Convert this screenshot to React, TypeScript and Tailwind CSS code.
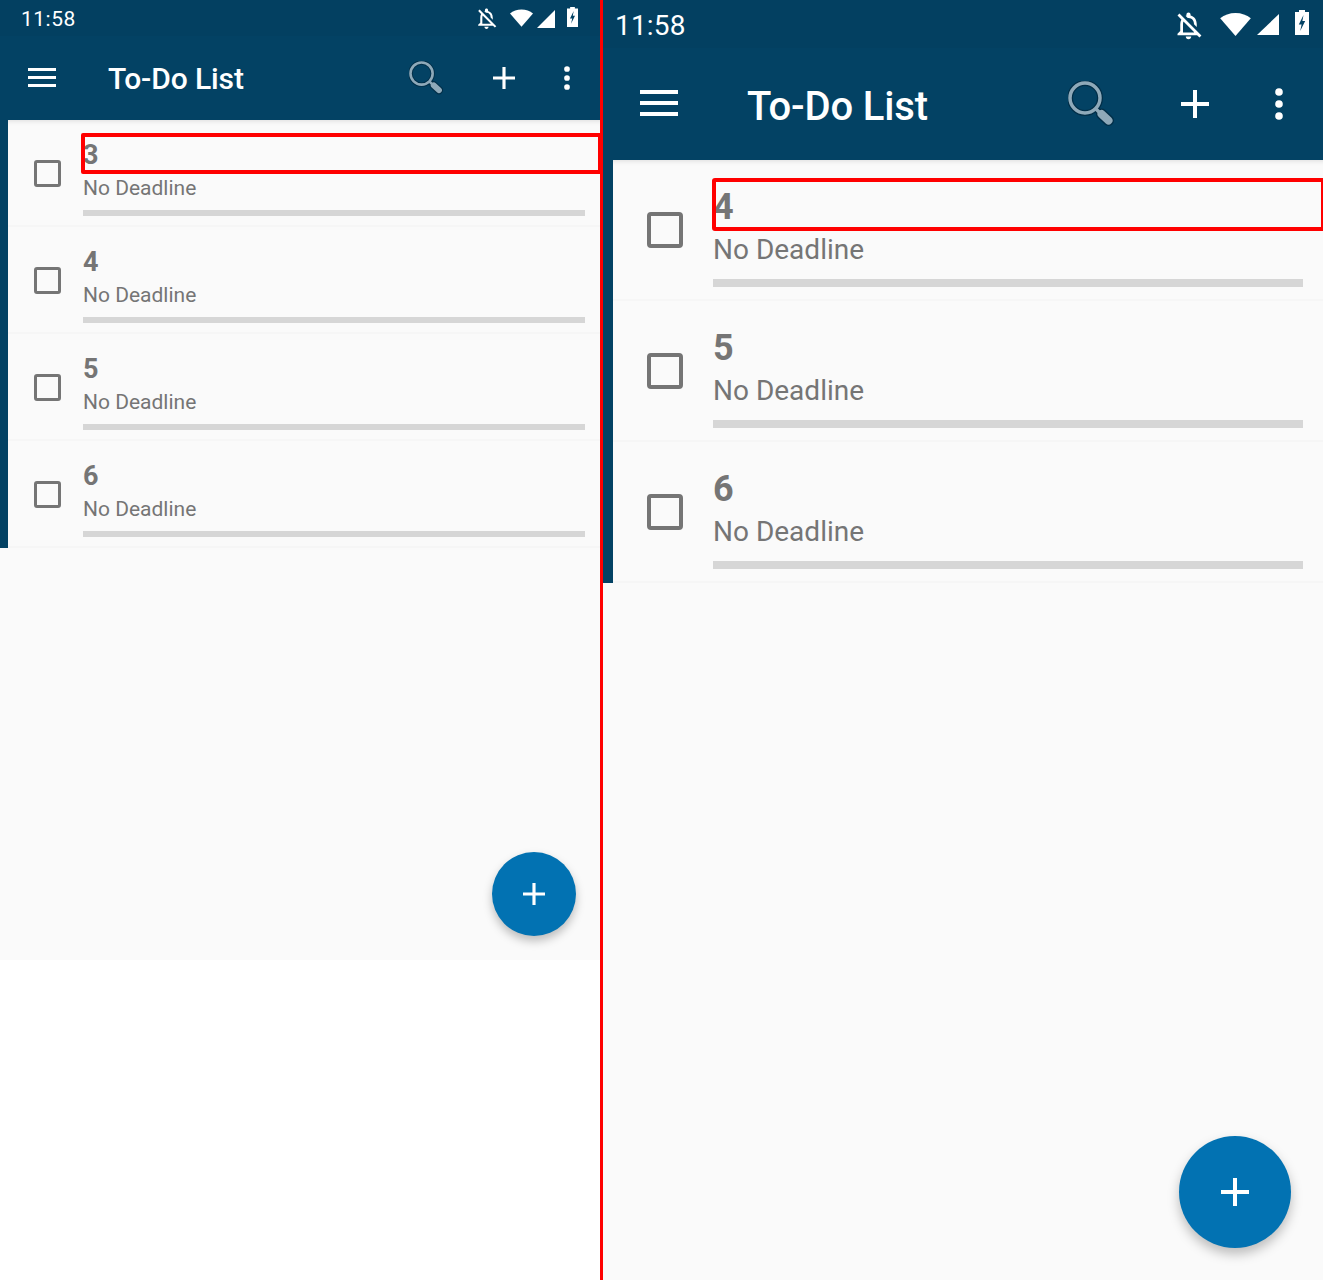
import React from 'react'

const DARK = 'bg-[#034264]'

function BellOff({ className }: { className: string }) {
  return (
    <svg viewBox="0 0 24 24" fill="#fff" className={className}>
      <path d="M12 22c1.1 0 2-.9 2-2h-4c0 1.1.9 2 2 2zm0-15.5c2.49 0 4 2.02 4 4.5v.1l2 2V11c0-3.08-1.64-5.64-4.5-6.32V4c0-.83-.67-1.5-1.5-1.5s-1.5.67-1.5 1.5v.68c-.24.06-.47.15-.69.23l1.64 1.64c.18-.02.36-.05.55-.05zM5.41 3.35L4 4.76l2.81 2.81C6.29 8.57 6 9.74 6 11v5l-2 2v1h14.24l1.74 1.74 1.41-1.41L5.41 3.35zM16 17H8v-6c0-.68.12-1.32.34-1.9L16 16.76V17z" />
    </svg>
  )
}

function Wifi({ className }: { className: string }) {
  return (
    <svg viewBox="0 0 24 18" fill="#fff" className={className}>
      <path d="M12 18 L0 4.2 C3.2 1.5 7.4 0 12 0 s8.8 1.5 12 4.2 Z" />
    </svg>
  )
}

function Signal({ className }: { className: string }) {
  return (
    <svg viewBox="0 0 18 18" preserveAspectRatio="none" fill="#fff" className={className}>
      <path d="M18 0 V18 H0 Z" />
    </svg>
  )
}

function Battery({ className }: { className: string }) {
  return (
    <svg viewBox="0 0 14 25" preserveAspectRatio="none" className={className}>
      <path fill="#fff" d="M4 0 H10 V2 H14 V25 H0 V2 H4 Z" />
      <path fill="#034264" d="M8.5 5 L3.8 14.5 H6.6 L5.2 21 L10.2 11 H7.4 Z" />
    </svg>
  )
}

function Search({ className }: { className: string }) {
  return (
    <svg viewBox="0 0 46 46" fill="none" className={className}>
      <circle cx="17" cy="17" r="15" stroke="#02283f" strokeOpacity="0.75" strokeWidth="6" />
      <path d="M28 28 L33 33" stroke="#02283f" strokeOpacity="0.75" strokeWidth="6" />
      <path d="M33.5 33 L40.5 39.5" stroke="#02283f" strokeOpacity="0.75" strokeWidth="11" strokeLinecap="round" />
      <circle cx="17" cy="17" r="15" stroke="#8ea9b9" strokeWidth="3.5" />
      <path d="M27.5 27.5 L33 33" stroke="#8ea9b9" strokeWidth="3.5" />
      <path d="M33.5 33 L40.5 39.5" stroke="#8ea9b9" strokeWidth="8" strokeLinecap="round" />
    </svg>
  )
}

function Plus({ className }: { className: string }) {
  return (
    <svg viewBox="0 0 28 28" fill="#fff" className={className}>
      <path d="M12 0 H16 V12 H28 V16 H16 V28 H12 V16 H0 V12 H12 Z" />
    </svg>
  )
}

function Dots({ className }: { className: string }) {
  return (
    <svg viewBox="0 0 8 32" fill="#fff" className={className}>
      <circle cx="4" cy="4" r="3.8" />
      <circle cx="4" cy="16" r="3.8" />
      <circle cx="4" cy="28" r="3.8" />
    </svg>
  )
}

function SmallRow({ label, boxed }: { label: string; boxed?: boolean }) {
  return (
    <div className="relative flex h-[107px] border-b-2 border-[#f6f6f6]">
      <div className="w-[75px] shrink-0 pl-[25.5px] pt-[39.5px]">
        <div className="h-[27px] w-[27px] rounded-[3px] border-[3px] border-[#757575]" />
      </div>
      <div className="flex-1 pr-[15px] pt-[19px]">
        <div className="h-[32px] text-[27px] leading-[32px] font-bold text-[#757575]">{label}</div>
        <div className="mt-[1px] h-[32px] text-[21px] leading-[32px] text-[#757575]">No Deadline</div>
        <div className="mt-[6px] h-[6px] bg-[#d6d6d6]" />
      </div>
      {boxed && (
        <div className="absolute left-[73px] right-[-2px] top-[13px] h-[41px] rounded-[2px] border-[4px] border-[#ff0000]" />
      )}
    </div>
  )
}

function LargeRow({ label, boxed }: { label: string; boxed?: boolean }) {
  return (
    <div className="relative flex h-[141px] border-b-2 border-[#f6f6f6]">
      <div className="w-[100px] shrink-0 pl-[34px] pt-[52px]">
        <div className="h-[36px] w-[36px] rounded-[4px] border-[4px] border-[#757575]" />
      </div>
      <div className="flex-1 pr-[20px] pt-[26px]">
        <div className="h-[42px] text-[36px] leading-[42px] font-bold text-[#757575]">{label}</div>
        <div className="mt-[1px] h-[42px] text-[28px] leading-[42px] text-[#757575]">No Deadline</div>
        <div className="mt-[8px] h-[8px] bg-[#d6d6d6]" />
      </div>
      {boxed && (
        <div className="absolute left-[98.5px] right-[-2px] top-[18px] h-[53px] rounded-[3px] border-[4px] border-[#ff0000]" />
      )}
    </div>
  )
}

function SmallPhone() {
  return (
    <div className="flex h-[1280px] w-[600px] shrink-0 flex-col bg-white">
      <div className="flex h-[36px] items-center bg-[#034061] pl-[21px] pr-[22px] text-white">
        <span className="pt-[2px] text-[21px] leading-none tracking-[0.5px]">11:58</span>
        <div className="ml-auto flex items-center">
          <BellOff className="h-[25px] w-[25px]" />
          <Wifi className="ml-[11px] h-[18px] w-[23px]" />
          <Signal className="ml-[4px] mt-[2px] h-[18px] w-[18px]" />
          <Battery className="mb-[2px] ml-[12px] h-[20px] w-[11px]" />
        </div>
      </div>
      <div className={`flex h-[84px] items-center ${DARK} pl-[28px] pr-[30px] text-white`}>
        <div className="mb-[1px] flex w-[28px] flex-col gap-[5px]">
          <div className="h-[3px] bg-white" />
          <div className="h-[3px] bg-white" />
          <div className="h-[3px] bg-white" />
        </div>
        <h1 className="ml-[52px] text-[30px] font-medium tracking-[-0.1px]">To-Do List</h1>
        <Search className="ml-auto h-[34px] w-[34px]" />
        <Plus className="ml-[50px] h-[22px] w-[22px]" />
        <Dots className="ml-[49px] h-[24px] w-[6px]" />
      </div>
      <div className="relative h-[840px] bg-[#fafafa]">
        <div className={`${DARK} pl-[8px]`}>
          <div className="bg-[#fafafa] shadow-[inset_0_6px_5px_-5px_rgba(0,0,0,0.12)]">
            <SmallRow label="3" boxed />
            <SmallRow label="4" />
            <SmallRow label="5" />
            <SmallRow label="6" />
          </div>
        </div>
        <button className="absolute left-[492px] top-[732px] flex h-[84px] w-[84px] items-center justify-center rounded-full bg-[#0272b2] shadow-[0_5px_10px_rgba(0,0,0,0.25)]">
          <Plus className="h-[22px] w-[22px]" />
        </button>
      </div>
    </div>
  )
}

function LargePhone() {
  return (
    <div className="flex h-[1280px] w-[720px] shrink-0 flex-col overflow-hidden bg-[#fafafa]">
      <div className="flex h-[48px] items-center bg-[#034061] pl-[12px] pr-[14px] text-white">
        <span className="pt-[4px] text-[28px] leading-none tracking-[0.2px]">11:58</span>
        <div className="ml-auto flex items-center">
          <BellOff className="mt-[2px] h-[33px] w-[33px]" />
          <Wifi className="ml-[15px] h-[23px] w-[31px]" />
          <Signal className="ml-[6px] mt-[1px] h-[21px] w-[22px]" />
          <Battery className="mb-[3px] ml-[16px] h-[25px] w-[14px]" />
        </div>
      </div>
      <div className={`flex h-[112px] items-center ${DARK} pl-[37px] pr-[40px] text-white`}>
        <div className="mb-[2px] flex w-[38px] flex-col gap-[7px]">
          <div className="h-[4px] bg-white" />
          <div className="h-[4px] bg-white" />
          <div className="h-[4px] bg-white" />
        </div>
        <h1 className="ml-[69px] mt-[6px] text-[40px] font-medium tracking-[-0.15px]">To-Do List</h1>
        <Search className="ml-auto h-[46px] w-[46px]" />
        <Plus className="ml-[67px] h-[28px] w-[28px]" />
        <Dots className="ml-[66px] h-[32px] w-[8px]" />
      </div>
      <div className="relative flex-1 bg-[#fafafa]">
        <div className={`${DARK} pl-[10px]`}>
          <div className="bg-[#fafafa] shadow-[inset_0_6px_5px_-5px_rgba(0,0,0,0.12)]">
            <LargeRow label="4" boxed />
            <LargeRow label="5" />
            <LargeRow label="6" />
          </div>
        </div>
        <button className="absolute left-[576px] top-[976px] flex h-[112px] w-[112px] items-center justify-center rounded-full bg-[#0272b2] shadow-[0_6px_12px_rgba(0,0,0,0.25)]">
          <Plus className="h-[28px] w-[28px]" />
        </button>
      </div>
    </div>
  )
}

export default function App() {
  return (
    <div className="flex h-[1280px] w-[1323px] overflow-hidden font-['Roboto',sans-serif]">
      <SmallPhone />
      <div className="w-[3px] shrink-0 bg-[#ff0000]" />
      <LargePhone />
    </div>
  )
}
